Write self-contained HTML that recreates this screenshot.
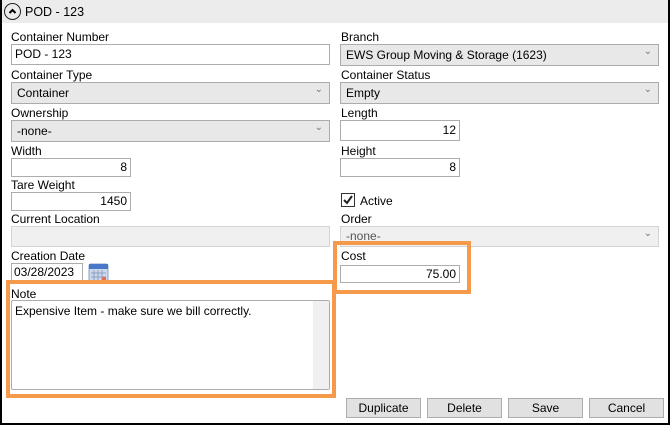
<!DOCTYPE html>
<html><head><style>
*{box-sizing:border-box;margin:0;padding:0}
body{width:670px;height:425px;background:#fff;font-family:"Liberation Sans",sans-serif;font-size:12px;color:#000;position:relative;overflow:hidden}
.a{position:absolute}
.frame{left:0;top:0;width:670px;height:425px;border:1px solid #000;border-top:none;border-left:2px solid #000;border-right:2px solid #000;border-bottom:2px solid #000}
.hdr{left:2px;top:0;width:666px;height:23px;background:#ececec}
.lbl{position:absolute;font-size:12px;line-height:14px}
.inp{position:absolute;border:1px solid #acacac;background:#fff;height:21px;line-height:19px;padding:0 3px;font-size:12px}
.sel{position:absolute;border:1px solid #acacac;background:#e8e8e8;height:22px;line-height:20px;padding:0 5px;font-size:12px}
.sel:after{content:"⌄";position:absolute;right:6px;top:-3px;font-size:10px;color:#777}
.r{text-align:right}
.dis{background:#f0f0f0;border-color:#d4d4d4;color:#555}
.btn{position:absolute;top:398px;width:75px;height:20px;border:1px solid #adadad;background:#e1e1e1;text-align:center;line-height:18px;font-size:12px}
.or{position:absolute;border:4px solid #f5994a}
</style></head><body>
<div class="a hdr"></div>
<div class="a" style="left:4px;top:3px;width:17px;height:17px;border:1.5px solid #222;border-radius:50%;"></div>
<svg class="a" style="left:4px;top:3px" width="17" height="17"><path d="M5.5 10 L8.5 7 L11.5 10" stroke="#000" stroke-width="2" fill="none"/></svg>
<div class="lbl" style="left:25px;top:5px;font-size:12.5px">POD - 123</div>

<div class="lbl" style="left:11px;top:30px">Container Number</div>
<div class="inp" style="left:11px;top:44px;width:319px">POD - 123</div>
<div class="lbl" style="left:11px;top:68px">Container Type</div>
<div class="sel" style="left:11px;top:82px;width:319px">Container</div>
<div class="lbl" style="left:11px;top:106px">Ownership</div>
<div class="sel" style="left:11px;top:120px;width:319px">-none-</div>
<div class="lbl" style="left:11px;top:144px">Width</div>
<div class="inp r" style="left:11px;top:158px;width:120px;height:19px;line-height:17px">8</div>
<div class="lbl" style="left:11px;top:178px">Tare Weight</div>
<div class="inp r" style="left:11px;top:192px;width:120px;height:19px;line-height:17px">1450</div>
<div class="lbl" style="left:11px;top:212px">Current Location</div>
<div class="inp dis" style="left:11px;top:226px;width:319px"></div>
<div class="lbl" style="left:11px;top:249px">Creation Date</div>
<div class="inp" style="left:11px;top:263px;width:72px;height:19px;line-height:17px;padding:0 2px">03/28/2023</div>
<svg class="a" style="left:88px;top:262px" width="21" height="21"><rect x="1" y="2" width="19" height="18" rx="2" fill="#cdd8ea" stroke="#8aa0c8"/><rect x="1" y="2" width="19" height="5" fill="#4a78c8"/><g stroke="#8aa0c8" stroke-width="1"><line x1="3" y1="11" x2="18" y2="11"/><line x1="3" y1="15" x2="18" y2="15"/><line x1="6" y1="8" x2="6" y2="19"/><line x1="10" y1="8" x2="10" y2="19"/><line x1="14" y1="8" x2="14" y2="19"/></g><rect x="14" y="15" width="4" height="4" fill="#e07050"/></svg>
<div class="lbl" style="left:11px;top:287px">Note</div>
<div class="inp" style="left:11px;top:300px;width:319px;height:90px;line-height:16px;padding:2px 3px;border-radius:2px">Expensive Item - make sure we bill correctly.</div>
<div class="a" style="left:313px;top:301px;width:16px;height:88px;background:#f0f0f0"></div>
<div class="or" style="left:6px;top:280px;width:330px;height:118px"></div>

<div class="lbl" style="left:341px;top:30px">Branch</div>
<div class="sel" style="left:340px;top:44px;width:319px">EWS Group Moving &amp; Storage (1623)</div>
<div class="lbl" style="left:341px;top:68px">Container Status</div>
<div class="sel" style="left:340px;top:82px;width:319px">Empty</div>
<div class="lbl" style="left:341px;top:106px">Length</div>
<div class="inp r" style="left:340px;top:120px;width:120px">12</div>
<div class="lbl" style="left:341px;top:144px">Height</div>
<div class="inp r" style="left:340px;top:158px;width:120px;height:19px;line-height:17px">8</div>
<div class="a" style="left:341px;top:193px;width:14px;height:14px;border:1px solid #333;background:#fff"></div>
<svg class="a" style="left:341px;top:193px" width="14" height="14"><path d="M3 7 L6 10 L11 3" stroke="#222" stroke-width="2" fill="none"/></svg>
<div class="lbl" style="left:360px;top:194px">Active</div>
<div class="lbl" style="left:341px;top:212px">Order</div>
<div class="sel dis" style="left:340px;top:226px;width:319px;height:21px;line-height:19px">-none-</div>
<div class="lbl" style="left:341px;top:249px">Cost</div>
<div class="inp r" style="left:340px;top:265px;width:120px;height:18px;line-height:16px">75.00</div>
<div class="or" style="left:333px;top:241px;width:138px;height:53px"></div>

<div class="btn" style="left:346px">Duplicate</div>
<div class="btn" style="left:427px">Delete</div>
<div class="btn" style="left:508px">Save</div>
<div class="btn" style="left:589px">Cancel</div>
<div class="a frame"></div>
</body></html>
